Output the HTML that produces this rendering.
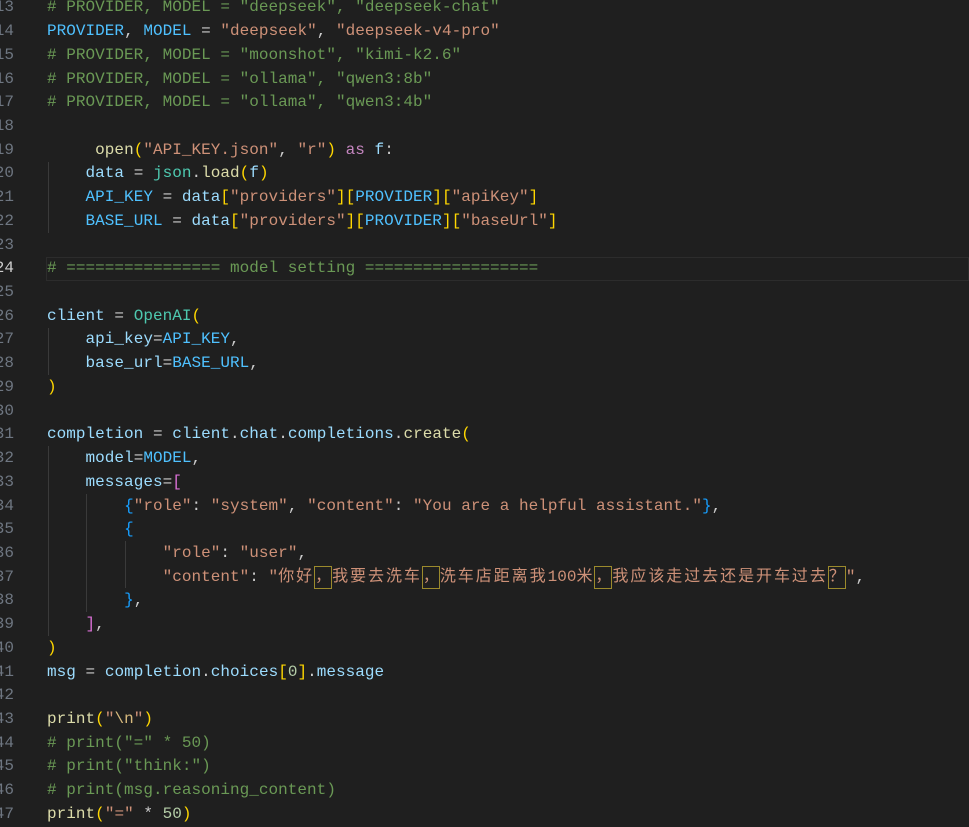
<!DOCTYPE html>
<html><head><meta charset="utf-8"><style>
html,body{margin:0;padding:0;background:#1f1f1f;width:969px;height:821px;overflow:hidden}
#ed{position:absolute;left:0;top:-3.6px;width:969px;font-family:"Liberation Mono","Noto Sans CJK SC",monospace;font-size:16px;letter-spacing:0.03px;color:#cccccc}
.l{position:relative;height:23.73px;line-height:23.73px;white-space:pre}
.n{position:absolute;left:-30px;width:44px;text-align:right;color:#6e7681}
.c{position:absolute;left:47px}
.cur{position:absolute;left:46px;right:0;top:0;height:21.7px;border:1px solid #2c2c2c}
.g{position:absolute;width:1px;background:#3a3a3a}
.cm{color:#6a9955}.v{color:#9cdcfe}.k{color:#4fc1ff}.s{color:#ce9178}.f{color:#dcdcaa}.t{color:#4ec9b0}.kw{color:#c586c0}.b1{color:#ffd700}.b2{color:#da70d6}.b3{color:#179fff}.num{color:#b5cea8}.e{color:#d7ba7d}
.cj{letter-spacing:1.95px}
.bx{display:inline-block;width:18px;height:23px;border:1px solid #9b8a2c;box-sizing:border-box;vertical-align:top;line-height:21px;letter-spacing:0}
</style></head><body>
<div id="ed">
<div class="l"><span class="n">13</span><span class="c cm"># PROVIDER, MODEL = "deepseek", "deepseek-chat"</span></div>
<div class="l"><span class="n">14</span><span class="c"><span class="k">PROVIDER</span>, <span class="k">MODEL</span> = <span class="s">"deepseek"</span>, <span class="s">"deepseek-v4-pro"</span></span></div>
<div class="l"><span class="n">15</span><span class="c cm"># PROVIDER, MODEL = "moonshot", "kimi-k2.6"</span></div>
<div class="l"><span class="n">16</span><span class="c cm"># PROVIDER, MODEL = "ollama", "qwen3:8b"</span></div>
<div class="l"><span class="n">17</span><span class="c cm"># PROVIDER, MODEL = "ollama", "qwen3:4b"</span></div>
<div class="l"><span class="n">18</span></div>
<div class="l"><span class="n">19</span><span class="c">     <span class="f">open</span><span class="b1">(</span><span class="s">"API_KEY.json"</span>, <span class="s">"r"</span><span class="b1">)</span> <span class="kw">as</span> <span class="v">f</span>:</span></div>
<div class="l"><span class="n">20</span><span class="c">    <span class="v">data</span> = <span class="t">json</span>.<span class="f">load</span><span class="b1">(</span><span class="v">f</span><span class="b1">)</span></span></div>
<div class="l"><span class="n">21</span><span class="c">    <span class="k">API_KEY</span> = <span class="v">data</span><span class="b1">[</span><span class="s">"providers"</span><span class="b1">][</span><span class="k">PROVIDER</span><span class="b1">][</span><span class="s">"apiKey"</span><span class="b1">]</span></span></div>
<div class="l"><span class="n">22</span><span class="c">    <span class="k">BASE_URL</span> = <span class="v">data</span><span class="b1">[</span><span class="s">"providers"</span><span class="b1">][</span><span class="k">PROVIDER</span><span class="b1">][</span><span class="s">"baseUrl"</span><span class="b1">]</span></span></div>
<div class="l"><span class="n">23</span></div>
<div class="l"><span class="cur"></span><span class="n" style="color:#cccccc">24</span><span class="c cm"># ================ model setting ==================</span></div>
<div class="l"><span class="n">25</span></div>
<div class="l"><span class="n">26</span><span class="c"><span class="v">client</span> = <span class="t">OpenAI</span><span class="b1">(</span></span></div>
<div class="l"><span class="n">27</span><span class="c">    <span class="v">api_key</span>=<span class="k">API_KEY</span>,</span></div>
<div class="l"><span class="n">28</span><span class="c">    <span class="v">base_url</span>=<span class="k">BASE_URL</span>,</span></div>
<div class="l"><span class="n">29</span><span class="c"><span class="b1">)</span></span></div>
<div class="l"><span class="n">30</span></div>
<div class="l"><span class="n">31</span><span class="c"><span class="v">completion</span> = <span class="v">client</span>.<span class="v">chat</span>.<span class="v">completions</span>.<span class="f">create</span><span class="b1">(</span></span></div>
<div class="l"><span class="n">32</span><span class="c">    <span class="v">model</span>=<span class="k">MODEL</span>,</span></div>
<div class="l"><span class="n">33</span><span class="c">    <span class="v">messages</span>=<span class="b2">[</span></span></div>
<div class="l"><span class="n">34</span><span class="c">        <span class="b3">{</span><span class="s">"role"</span>: <span class="s">"system"</span>, <span class="s">"content"</span>: <span class="s">"You are a helpful assistant."</span><span class="b3">}</span>,</span></div>
<div class="l"><span class="n">35</span><span class="c">        <span class="b3">{</span></span></div>
<div class="l"><span class="n">36</span><span class="c">            <span class="s">"role"</span>: <span class="s">"user"</span>,</span></div>
<div class="l"><span class="n">37</span><span class="c">            <span class="s">"content"</span>: <span class="s">"<span class="cj">你好</span><span class="bx">，</span><span class="cj">我要去洗车</span><span class="bx">，</span><span class="cj">洗车店距离我</span>100<span class="cj">米</span><span class="bx">，</span><span class="cj">我应该走过去还是开车过去</span><span class="bx">？</span>"</span>,</span></div>
<div class="l"><span class="n">38</span><span class="c">        <span class="b3">}</span>,</span></div>
<div class="l"><span class="n">39</span><span class="c">    <span class="b2">]</span>,</span></div>
<div class="l"><span class="n">40</span><span class="c"><span class="b1">)</span></span></div>
<div class="l"><span class="n">41</span><span class="c"><span class="v">msg</span> = <span class="v">completion</span>.<span class="v">choices</span><span class="b1">[</span><span class="num">0</span><span class="b1">]</span>.<span class="v">message</span></span></div>
<div class="l"><span class="n">42</span></div>
<div class="l"><span class="n">43</span><span class="c"><span class="f">print</span><span class="b1">(</span><span class="s">"<span class="e">\n</span>"</span><span class="b1">)</span></span></div>
<div class="l"><span class="n">44</span><span class="c cm"># print("=" * 50)</span></div>
<div class="l"><span class="n">45</span><span class="c cm"># print("think:")</span></div>
<div class="l"><span class="n">46</span><span class="c cm"># print(msg.reasoning_content)</span></div>
<div class="l"><span class="n">47</span><span class="c"><span class="f">print</span><span class="b1">(</span><span class="s">"="</span> * <span class="num">50</span><span class="b1">)</span></span></div>
<div class="g" style="left:48px;top:166px;height:71px"></div>
<div class="g" style="left:48px;top:332px;height:47px"></div>
<div class="g" style="left:48px;top:450px;height:190px"></div>
<div class="g" style="left:86px;top:498px;height:118px"></div>
<div class="g" style="left:125px;top:545px;height:47px"></div>
</div>
</body></html>
